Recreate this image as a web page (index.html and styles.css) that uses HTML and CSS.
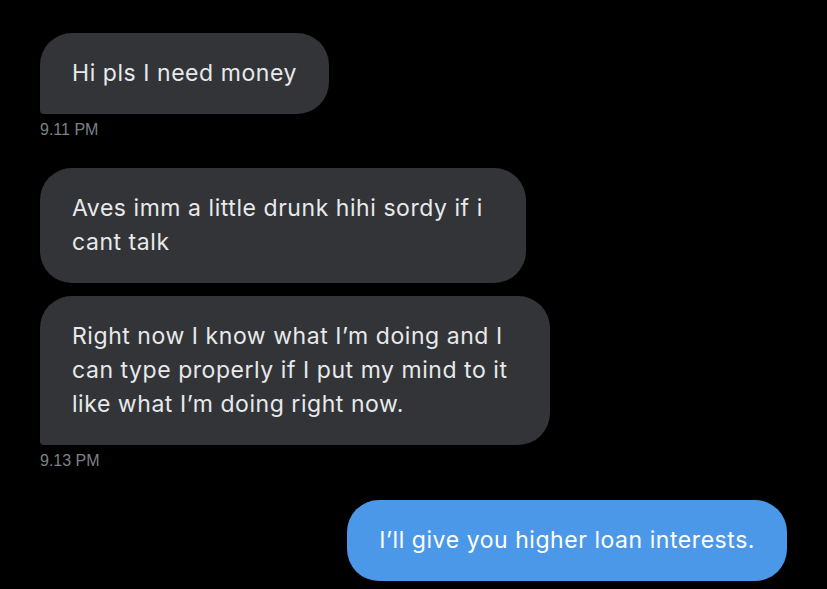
FILE: index.html
```html
<!DOCTYPE html>
<html>
<head>
<meta charset="utf-8">
<link rel="stylesheet" href="styles.css">
</head>
<body>
<div class="chat">
  <div class="group group-in">
    <div class="bubble bubble-in corner-bl">Hi pls I need money</div>
    <div class="time">9.11 PM</div>
  </div>
  <div class="group group-in">
    <div class="bubble bubble-in w-a">Aves imm a little drunk hihi sordy if i cant talk</div>
    <div class="bubble bubble-in corner-bl w-b">Right now I know what I’m doing and I can type properly if I put my mind to it like what I’m doing right now.</div>
    <div class="time">9.13 PM</div>
  </div>
  <div class="group group-out">
    <div class="bubble bubble-out">I’ll give you higher loan interests.</div>
  </div>
</div>
</body>
</html>
```
FILE: styles.css
```css
html, body {
  margin: 0;
  padding: 0;
  background: #000;
}
body {
  width: 827px;
  height: 589px;
  overflow: hidden;
}
.chat {
  display: flex;
  flex-direction: column;
  padding: 33px 40px 0 40px;
}
.group {
  display: flex;
  flex-direction: column;
  gap: 13px;
}
.group + .group {
  margin-top: 29px;
}
.group-in {
  align-items: flex-start;
}
.group-out {
  align-items: flex-end;
  margin-top: 30px !important;
}
.bubble {
  box-sizing: border-box;
  font-family: Inter, "Noto Sans", sans-serif;
  font-size: 23px;
  letter-spacing: 0.55px;
  line-height: 34px;
  padding: 23px 32px 24px;
  border-radius: 32px;
  color: #e7e9ea;
}
.bubble-in {
  background: #333438;
}
.corner-bl {
  border-bottom-left-radius: 4px;
}
.w-a { width: 486px; }
.w-b { width: 510px; }
.bubble-out {
  background: #4c98e8;
  color: #fff;
}
.time {
  font-family: "Liberation Sans", Arial, sans-serif;
  font-size: 16px;
  line-height: 18px;
  color: #7d8185;
  margin-top: -6px;
}
```
